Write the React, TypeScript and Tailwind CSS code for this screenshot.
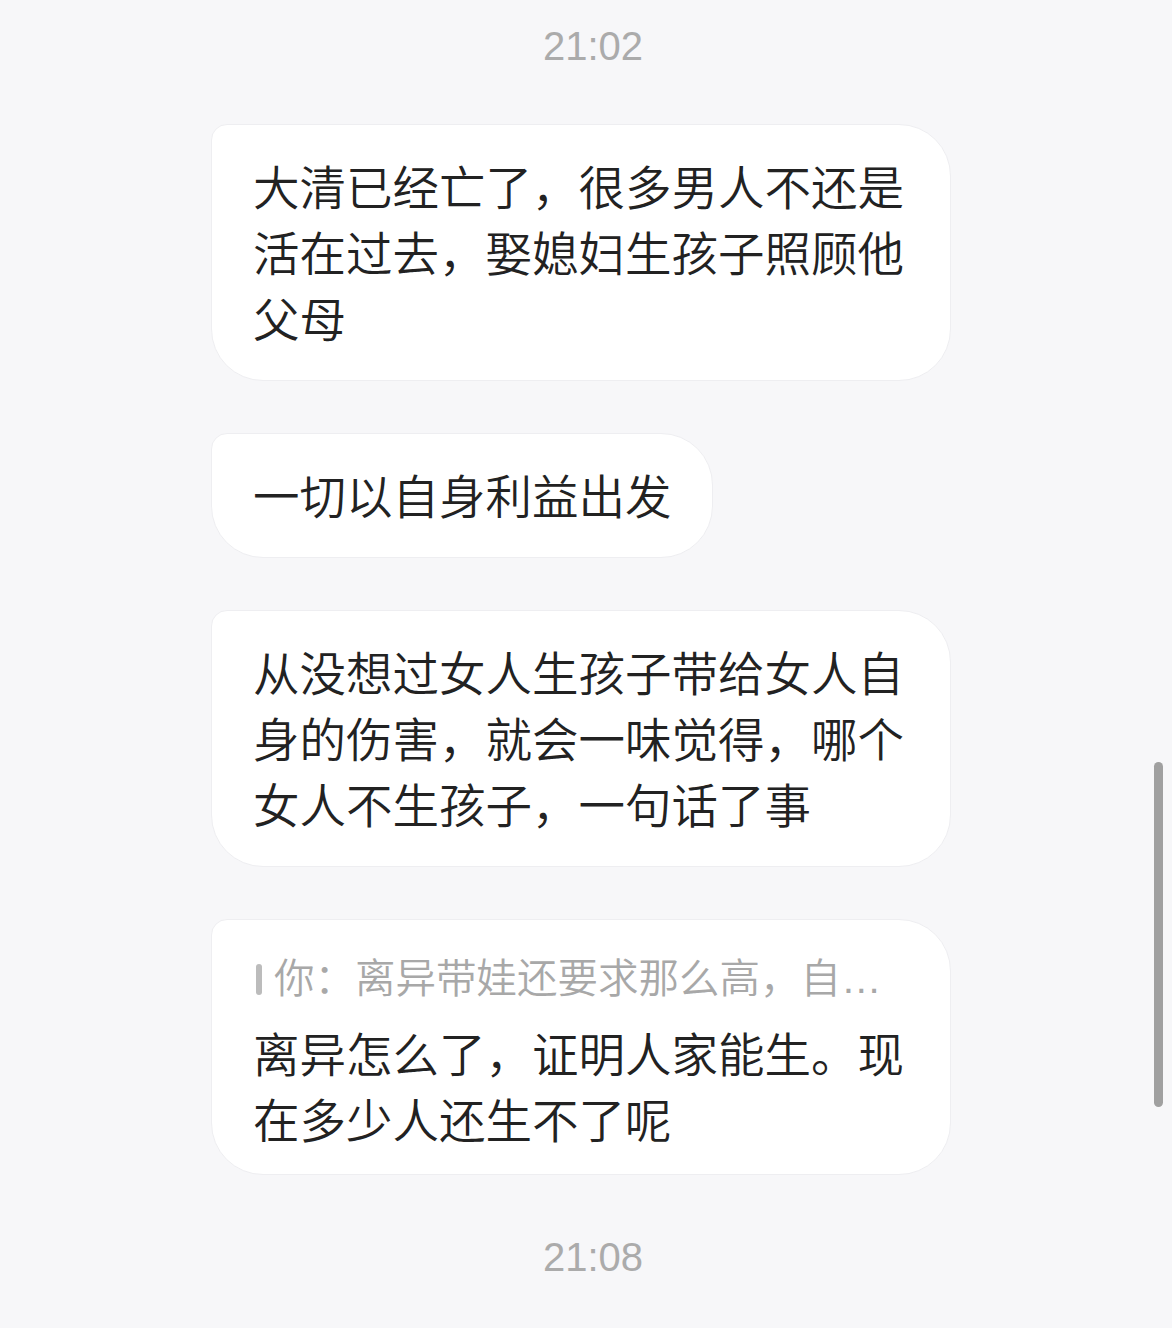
const messages = [
  { text: '大清已经亡了，很多男人不还是活在过去，娶媳妇生孩子照顾他父母' },
  { text: '一切以自身利益出发' },
  { text: '从没想过女人生孩子带给女人自身的伤害，就会一味觉得，哪个女人不生孩子，一句话了事' },
  {
    quote: '你：离异带娃还要求那么高，自…',
    text: '离异怎么了，证明人家能生。现在多少人还生不了呢',
  },
];

function TimeLabel({ children }: { children: string }) {
  return (
    <div className="flex justify-center pl-[14px]">
      <span className="font-['Liberation_Sans',sans-serif] text-[40px] leading-[48px] text-[#ababab]">
        {children}
      </span>
    </div>
  );
}

export default function App() {
  return (
    <div className="relative h-[1328px] w-full overflow-hidden bg-[#f7f7f9] font-['Noto_Sans_CJK_SC',sans-serif]">
      <div className="flex flex-col pt-[22px]">
        <TimeLabel>21:02</TimeLabel>

        {/* Message bubbles */}
        <div className="mt-[54px] flex flex-col items-start gap-[52px] pl-[211px]">
          {messages.map((m, i) => (
            <div
              key={i}
              className={`max-w-[740px] rounded-[52px] rounded-tl-[16px] border border-[#eeeef1] bg-white pl-[41px] pr-[40px] ${
                m.quote ? 'pb-[23px] pt-[31px]' : 'pb-[30px] pt-[27px]'
              }`}
            >
              {m.quote && (
                <div className="mb-[11px] flex items-center">
                  <span className="ml-[3px] h-[31px] w-[6px] rounded-full bg-[#bcbcbc]" />
                  <span className="ml-[12px] whitespace-nowrap font-['Liberation_Sans','Noto_Sans_CJK_SC',sans-serif] text-[40.5px] font-[350] leading-[57px] text-[#a8a8a8]">
                    {m.quote}
                  </span>
                </div>
              )}
              <p className="text-[46.5px] font-[350] leading-[66px] text-[#222222]">{m.text}</p>
            </div>
          ))}
        </div>

        <div className="mt-[58px]">
          <TimeLabel>21:08</TimeLabel>
        </div>
      </div>

      {/* Scroll indicator */}
      <div className="absolute left-[1154px] top-[762px] h-[345px] w-[9px] rounded-full bg-[#a0a0a0]" />
    </div>
  );
}
